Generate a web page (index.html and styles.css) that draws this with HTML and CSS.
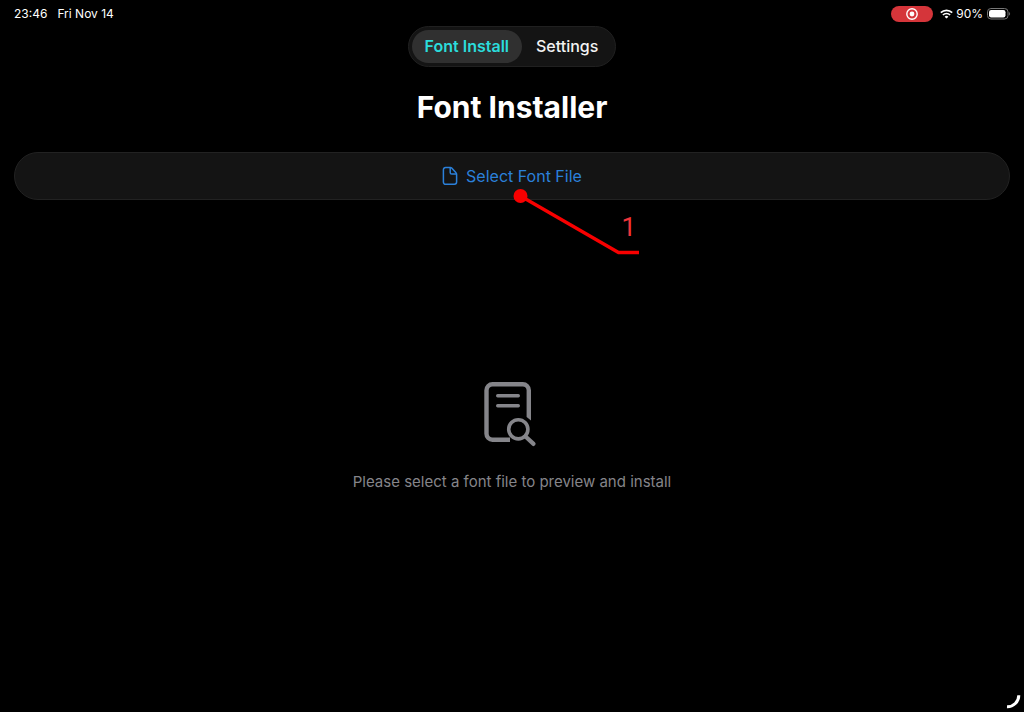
FILE: index.html
```html
<!DOCTYPE html>
<html lang="en">
<head>
  <meta charset="UTF-8" />
  <meta name="viewport" content="width=device-width, initial-scale=1.0" />
  <title>Font Installer</title>
  <link rel="stylesheet" href="styles.css">
</head>
<body>
  <!-- Status Bar -->
  <header class="status-bar">
    <div class="status-group status-time">
      <span>23:46</span>
      <span>Fri Nov 14</span>
    </div>
    <div class="status-group">
      <span class="recording">
        <svg width="12" height="12" viewBox="0 0 12 12" aria-hidden="true">
          <circle cx="6" cy="6" r="5.2" fill="none" stroke="#fff" stroke-width="1.4" />
          <circle cx="6" cy="6" r="2.4" fill="#fff" />
        </svg>
      </span>
      <svg width="13" height="10" viewBox="0 0 13 10" fill="none" stroke="#fff" stroke-width="1.7" aria-hidden="true">
        <path d="M0.8 3.7a8.1 8.1 0 0 1 11.4 0" />
        <path d="M2.9 6a5.1 5.1 0 0 1 7.2 0" />
        <path d="M6.5 9.6L4.6 7.7a2.7 2.7 0 0 1 3.8 0z" fill="#fff" stroke="none" />
      </svg>
      <span class="percent">90%</span>
      <svg width="24" height="12" viewBox="0 0 24 12" aria-hidden="true">
        <rect x="0.5" y="0.5" width="20.5" height="10.5" rx="3.4" fill="none" stroke="#777" />
        <rect x="2" y="2" width="16.5" height="7.5" rx="2.2" fill="#fff" />
        <path d="M22.2 4v3.6c1.2-.5 1.2-3.1 0-3.6z" fill="#777" />
      </svg>
    </div>
  </header>

  <!-- Tabs -->
  <nav class="tabs">
    <button class="tab active" type="button">Font Install</button>
    <button class="tab" type="button">Settings</button>
  </nav>

  <main>
    <h1>Font Installer</h1>

    <div class="select-wrap">
      <button class="select-button" type="button">
        <svg width="16" height="20" viewBox="0 0 16 20" fill="none" stroke="currentColor" stroke-width="1.5" stroke-linejoin="round" aria-hidden="true">
          <path d="M8.3 1.5H3.6A2.2 2.2 0 0 0 1.4 3.7v12.4a2.2 2.2 0 0 0 2.2 2.2h8.8a2.2 2.2 0 0 0 2.2-2.2V8.2a2 2 0 0 0-.6-1.4L9.7 2.1a2 2 0 0 0-1.4-.6z" />
          <path d="M8.2 1.8v4.700a1.600 1.600 0 0 0 1.600 1.600h4.600" />
        </svg>
        Select Font File
      </button>

      <!-- Callout -->
      <div class="callout">
        <svg width="128" height="68" viewBox="0 0 128 68" fill="none" aria-hidden="true">
          <path d="M8.5 8L106.5 64.5H127" stroke="#f80000" stroke-width="3.4" />
          <circle cx="8.5" cy="8" r="7" fill="#f80000" />
        </svg>
        <span class="callout-number">1</span>
      </div>
    </div>

    <!-- Empty State -->
    <section class="empty">
      <svg width="60" height="66" viewBox="0 0 60 66" fill="none" stroke="#85858a" stroke-linecap="round" aria-hidden="true">
        <path d="M28 58.8H10.500a6 6 0 0 1-6-6V9.200a6 6 0 0 1 6-6h30.300a6 6 0 0 1 6 6V36" stroke-width="4.400" stroke-linecap="butt" />
        <path d="M44.600 35.900L49 39.500V35.500z" fill="#85858a" stroke="none" />
        <path d="M15.700 14.700h20.600M15.700 24.700h20.600" stroke-width="3.400" />
        <circle cx="36.300" cy="48.300" r="9.600" stroke-width="3.600" />
        <path d="M43.500 55.500l8 7.400" stroke-width="4.200" />
      </svg>
      <p>Please select a font file to preview and install</p>
    </section>
  </main>

  <!-- Corner Handle -->
  <svg class="corner" width="16" height="16" viewBox="0 0 16 16" fill="none" aria-hidden="true">
    <path d="M12.800 1.300A11.500 11.500 0 0 1 1 12.800" stroke="#fff" stroke-width="3" />
  </svg>
</body>
</html>
```

FILE: styles.css
```css
* {
  box-sizing: border-box;
}
body {
  margin: 0;
  min-height: 100vh;
  display: flex;
  flex-direction: column;
  background: #000;
  color: #fff;
  font-family: Inter, "Liberation Sans", sans-serif;
}
button {
  font-family: inherit;
  cursor: pointer;
}

/* Status Bar */
.status-bar {
  display: flex;
  justify-content: space-between;
  padding: 6px 13px 4px 14px;
  font-size: 12px;
  line-height: 16px;
}
.status-group {
  display: flex;
  align-items: center;
}
.status-time {
  gap: 10px;
}
.recording {
  display: flex;
  align-items: center;
  justify-content: center;
  width: 42px;
  height: 16px;
  margin-right: 7px;
  border-radius: 8px;
  background: #d5353a;
}
.percent {
  margin: 0 4px 0 3px;
}

/* Tabs */
.tabs {
  display: flex;
  align-self: center;
  padding: 3px;
  border: 1px solid #202020;
  border-radius: 21px;
  background: #141414;
}
.tab {
  height: 33px;
  padding: 0 14px 2px;
  border: none;
  border-radius: 17px;
  background: transparent;
  color: #f2f2f2;
  font-size: 16px;
  font-weight: 500;
}
.tab.active {
  padding: 0 13px 2px;
  background: #303030;
  color: #2bdcdc;
  font-weight: 600;
}

/* Content */
main {
  flex: 1;
  display: flex;
  flex-direction: column;
  padding: 0 14px;
}
h1 {
  margin: 22px 0 27px;
  font-size: 30px;
  line-height: 36px;
  font-weight: 700;
  text-align: center;
}
.select-wrap {
  position: relative;
}
.select-button {
  display: flex;
  align-items: center;
  justify-content: center;
  gap: 8px;
  width: 100%;
  height: 48px;
  border: 1px solid #222;
  border-radius: 24px;
  background: #141414;
  color: #2b80da;
  font-size: 16px;
}

/* Callout */
.callout {
  position: absolute;
  top: 36px;
  left: 50%;
  pointer-events: none;
}
.callout-number {
  position: absolute;
  top: 24px;
  right: 4px;
  color: #f0353a;
  font-family: Roboto, sans-serif;
  font-size: 26px;
  line-height: 30px;
}

/* Empty State */
.empty {
  flex: 1;
  display: flex;
  flex-direction: column;
  align-items: center;
  justify-content: center;
  gap: 24px;
  padding-bottom: 38px;
}
.empty p {
  margin: 0;
  color: #85858a;
  font-size: 15px;
  line-height: 22px;
}

/* Corner Handle */
.corner {
  position: fixed;
  right: 2px;
  bottom: 2px;
}
```
